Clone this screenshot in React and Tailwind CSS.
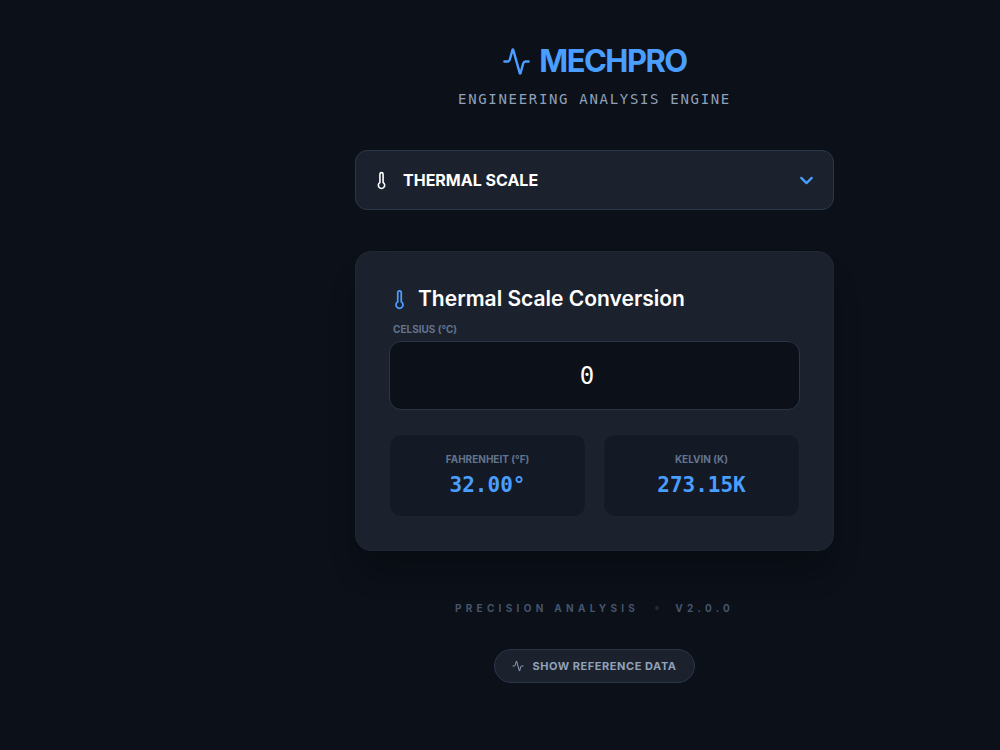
import { useState } from "react";
import { Activity, ChevronDown, Thermometer } from "lucide-react";

const modules = [{ id: "thermal", name: "THERMAL SCALE" }];

function ResultCard({ label, value }) {
  return (
    <div className="rounded-xl border border-[#1b2434] bg-[#141a25] px-4 pt-4 pb-[17px] text-center">
      <p className="text-[10px] leading-4 font-bold text-slate-500">{label}</p>
      <p className="mt-1 font-['DejaVu_Sans_Mono',monospace] text-[21px] leading-7 font-bold text-[#4a9eff]">
        {value}
      </p>
    </div>
  );
}

export default function App() {
  const [activeModule, setActiveModule] = useState("thermal");
  const [celsius, setCelsius] = useState("0");

  const degrees = parseFloat(celsius) || 0;
  const fahrenheit = (degrees * 9) / 5 + 32;
  const kelvin = degrees + 273.15;

  return (
    <div className="min-h-screen bg-[#0b1019] px-4 pt-[41px] pb-16 font-['Inter',sans-serif] text-white [font-optical-sizing:none] md:pr-0 md:pl-[189px]">
      <main className="mx-auto w-full max-w-[479px]">
        <header className="text-center">
          <h1 className="flex items-center justify-center gap-2 text-[31px] leading-10 font-bold tracking-tighter text-[#4a9eff]">
            <Activity size={29} />
            MECHPRO
          </h1>
          <p className="mt-2 font-['DejaVu_Sans_Mono',monospace] text-sm tracking-[0.12em] text-slate-400">
            ENGINEERING ANALYSIS ENGINE
          </p>
        </header>

        <div className="mt-[41px] flex h-[60px] items-center gap-3 rounded-xl border border-[#2a364a] bg-[#1c222d] px-4">
          <Thermometer size={19} className="shrink-0" />
          <select
            aria-label="Module"
            value={activeModule}
            onChange={(e) => setActiveModule(e.target.value)}
            className="h-full min-w-0 flex-1 appearance-none bg-transparent text-base font-bold outline-none"
          >
            {modules.map((item) => (
              <option key={item.id} value={item.id}>
                {item.name}
              </option>
            ))}
          </select>
          <ChevronDown
            size={21}
            strokeWidth={2.5}
            className="pointer-events-none shrink-0 text-[#4a9eff]"
          />
        </div>

        <section className="mt-[41px] rounded-2xl border border-[#1f2733] bg-[#1c222d] p-[33px] shadow-[0_24px_32px_-8px] shadow-black/30">
          <h2 className="flex items-center gap-2 text-[21px] leading-7 font-semibold">
            <Thermometer size={21} className="text-[#4a9eff]" />
            Thermal Scale Conversion
          </h2>
          <label
            htmlFor="celsius"
            className="mt-2 ml-1 block text-[10px] leading-4 font-bold text-slate-500"
          >
            CELSIUS (°C)
          </label>
          <input
            id="celsius"
            type="number"
            value={celsius}
            onChange={(e) => setCelsius(e.target.value)}
            className="mt-1 block h-[69px] w-full rounded-xl border border-[#2a364a] bg-[#0b1019] px-4 text-center font-['DejaVu_Sans_Mono',monospace] text-2xl outline-none"
          />
          <div className="mt-6 grid grid-cols-2 gap-[17px]">
            <ResultCard
              label="FAHRENHEIT (°F)"
              value={`${fahrenheit.toFixed(2)}°`}
            />
            <ResultCard label="KELVIN (K)" value={`${kelvin.toFixed(2)}K`} />
          </div>
        </section>

        <footer className="mt-[49px] flex flex-col items-center">
          <p className="flex items-center gap-4 text-[10px] leading-4 font-bold tracking-[0.43em] text-slate-600">
            <span>PRECISION ANALYSIS</span>
            <span className="size-1 rounded-full bg-slate-800" />
            <span>V2.0.0</span>
          </p>
          <button
            type="button"
            className="mt-[33px] flex h-[34px] items-center gap-2 rounded-full border border-[#2a364a] bg-[#1c222d] px-[17px] text-[11px] font-bold tracking-wider text-slate-400"
          >
            <Activity size={12} />
            SHOW REFERENCE DATA
          </button>
        </footer>
      </main>
    </div>
  );
}
